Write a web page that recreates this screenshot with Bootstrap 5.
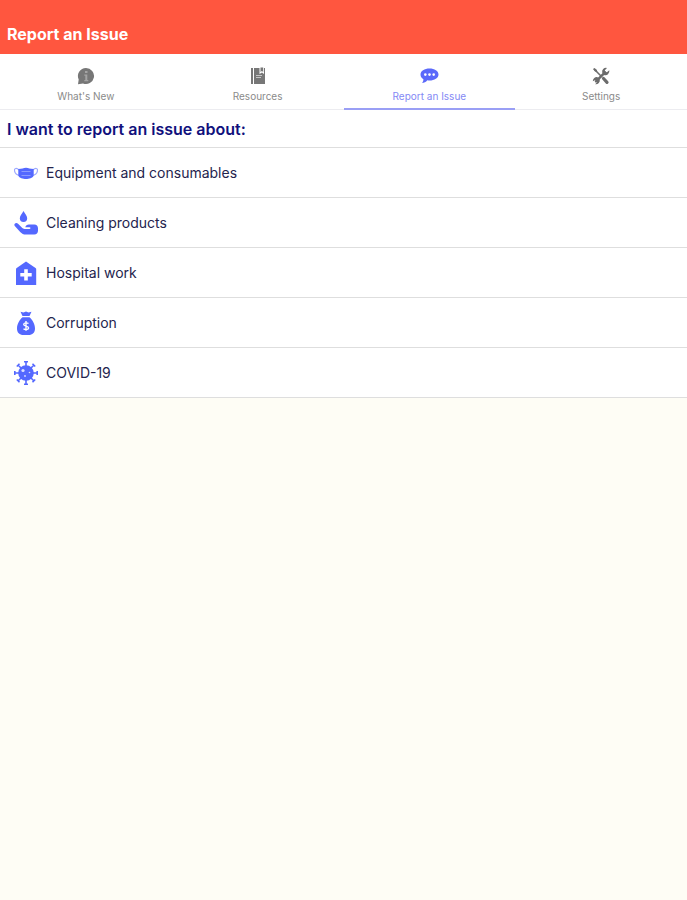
<!DOCTYPE html>
<html lang="en">
<head>
<meta charset="utf-8">
<meta name="viewport" content="width=device-width, initial-scale=1">
<title>Report an Issue</title>
<link href="https://cdn.jsdelivr.net/npm/bootstrap@5.3.0/dist/css/bootstrap.min.css" rel="stylesheet">
<style>
  body { font-family: Inter, "Liberation Sans", sans-serif; background: #fefdf5; color: #1c1c4c; }
  .app-header { background: #ff563f; padding: 24px 7px 10px; }
  .app-title { font-size: 16px; line-height: 20px; font-weight: 700; color: #fff; }
  .app-tabs { border-bottom: 1px solid #ececf0; }
  .app-tab { flex: 1 1 0; padding: 12px 0 6px; border-bottom: 2px solid transparent; color: #8a8a8a; font-size: 10px; line-height: 12px; gap: 4px; margin-bottom: -1px; }
  .app-tab svg { width: 20px; height: 20px; }
  .app-tab.active { color: #8489f5; border-bottom-color: #9a9ff5; }
  .app-tab.active svg { color: #5b69fa; }
  .section-title { font-size: 16px; line-height: 20px; font-weight: 600; color: #10107c; padding: 9px 7px 8px; border-bottom: 1px solid #dedede; }
  .issue-row { height: 50px; padding: 0 14px; gap: 8px; font-size: 14px; line-height: 20px; color: #24244e; border-bottom: 1px solid #dedede; }
  .issue-row svg { width: 24px; height: 24px; color: #5468ff; flex: none; }
</style>
<script defer src="https://cdn.jsdelivr.net/npm/bootstrap@5.3.0/dist/js/bootstrap.bundle.min.js"></script>
</head>
<body>
<header class="app-header"><h1 class="app-title m-0">Report an Issue</h1></header>
<nav class="app-tabs bg-white d-flex" aria-label="Main">
  <a class="app-tab d-flex flex-column align-items-center text-decoration-none" href="#news">
    <svg viewBox="0 0 20 20" aria-hidden="true"><path fill="#777" d="M10 2a8 8 0 1 1-3 15.400L2 18.200l.7-4.700A8 8 0 0 1 10 2z"/><path fill="#a4a4a4" d="M9 5h2.500v2H9zM8.300 8.500h3V14h1v1.300H8.300V14h1V9.800h-1z"/></svg>
    <span>What's New</span>
  </a>
  <a class="app-tab d-flex flex-column align-items-center text-decoration-none" href="#resources">
    <svg viewBox="0 0 20 20" aria-hidden="true"><path fill="#777" d="M3 2h2v16H3zM6 2h5.500v6l2.500-1.500L16 8V2h1v16H6z"/><path fill="#777" d="M12.500 1.500h2.700v4.500l-1.300-1-1.400 1z"/><path stroke="#c4c4c4" d="M8 9.500h6M8 11.500h5"/></svg>
    <span>Resources</span>
  </a>
  <a class="app-tab active d-flex flex-column align-items-center text-decoration-none" href="#report" aria-current="page">
    <svg viewBox="0 0 20 20" aria-hidden="true"><path fill="currentColor" d="M10.500 2.500c5 0 9 2.500 9 6s-4 6-9 6c-.8 0-1.500 0-2.200-.2C7 16 5 17 3 17c.9-1 1.500-2.300 1.400-3.800C2.600 12.100 1.500 10.500 1.500 8.500c0-3.500 4-6 9-6z"/><g fill="#fff"><circle cx="6.300" cy="8.600" r="1.300"/><circle cx="10.500" cy="8.600" r="1.300"/><circle cx="14.700" cy="8.600" r="1.300"/></g></svg>
    <span>Report an Issue</span>
  </a>
  <a class="app-tab d-flex flex-column align-items-center text-decoration-none" href="#settings">
    <svg viewBox="0 0 20 20" aria-hidden="true"><g fill="none" stroke="#6c6c6c" stroke-linecap="round"><path stroke-width="1.500" d="M3.500 3.500l7 7"/><path stroke-width="3.200" d="M12.500 12.500l3.500 3.800"/><path stroke-width="2.400" d="M5 15.300l9-9"/></g><path fill="#6c6c6c" d="M2 3l1.500-1L6 4l.2 2L4 5.500zM18.300 4.300a4 4 0 0 1-5.300 4.600L11.300 7A4 4 0 0 1 16 1.900L13.800 4.300l.5 1.500 1.600.4zM1.800 15.200a4 4 0 0 1 4.800-4L8.700 13.200a4 4 0 0 1-4.500 5L6 16.200l-.5-1.600-1.600-.4z"/></svg>
    <span>Settings</span>
  </a>
</nav>
<main class="bg-white">
  <h2 class="section-title m-0">I want to report an issue about:</h2>
  <div class="d-flex flex-column">
    <a class="issue-row d-flex align-items-center text-decoration-none" href="#equipment">
      <svg viewBox="0 0 24 24" aria-hidden="true"><g fill="none" stroke="#9ca8ff" stroke-width="1.200"><path d="M5 9C2.500 6.500.3 7.300.5 9.500c.2 2.500 2.500 4.500 5.500 5"/><path d="M19 9c2.500-2.500 4.700-1.700 4.500.5-.2 2.500-2.500 4.500-5.500 5"/></g><path fill="currentColor" d="M4.300 8C8 8 9.500 6.700 12 6.700S16 8 19.700 8v6.500c-1 2.700-4.700 3.500-7.700 3.500s-6.700-.8-7.700-3.500z"/><path fill="none" stroke="#8c9aff" d="M7.500 10.500h9M7.500 14.500h9"/></svg>
      <span>Equipment and consumables</span>
    </a>
    <a class="issue-row d-flex align-items-center text-decoration-none" href="#cleaning">
      <svg viewBox="0 0 24 24" aria-hidden="true"><path fill="currentColor" d="M9.500 0c1.500 2.800 3.700 4.800 3.700 7.200a3.700 3.700 0 0 1-7.400 0C5.800 4.800 8 2.800 9.500 0zM1 12.500c1-1 2.300-.5 3.300.5l4 4c1 .9 2 1 3.200 1h4c1.300 0 1.300-1.700 0-1.700h-4.200c.5-1.800 1.700-2.700 3.500-2.700h5.500c2.300 0 3.700 1.600 3.700 3.700v2.500c0 2.300-1.500 3.700-3.700 3.700H12c-2.500 0-4.200-.9-5.800-2.600L1 15.300c-.9-.9-.9-2 0-2.800z"/></svg>
      <span>Cleaning products</span>
    </a>
    <a class="issue-row d-flex align-items-center text-decoration-none" href="#hospital">
      <svg viewBox="0 0 24 24" aria-hidden="true"><path fill="currentColor" d="M12 0.500l9.500 6.500c.5.400.7.800.7 1.400V24H2V8.400c0-.6.200-1 .7-1.400z"/><path fill="#fff" d="M10.200 8.200h3.600v3.800h3.900v3.600h-3.900v3.800h-3.600v-3.800H6.300V12h3.900z"/></svg>
      <span>Hospital work</span>
    </a>
    <a class="issue-row d-flex align-items-center text-decoration-none" href="#corruption">
      <svg viewBox="0 0 24 24" aria-hidden="true"><path fill="currentColor" d="M6.500 .8l3 .8L12 .5l2.500 1.100 3-.8L15.500 5H8.500zM8.500 6.300h7C18.500 9 21 13 21 17.500c0 4.300-2.500 6.500-6.500 6.500h-5C5.500 24 3 21.800 3 17.500 3 13 5.500 9 8.500 6.300z"/><path fill="none" stroke="#fff" stroke-width="1.400" d="M14.500 12.500c-1-.8-4.800-1.200-4.800 1 0 2 4.900 1.200 4.900 3.500 0 2-3.700 2-5.100.8M12 10v9.800"/></svg>
      <span>Corruption</span>
    </a>
    <a class="issue-row d-flex align-items-center text-decoration-none" href="#covid">
      <svg viewBox="0 0 24 24" aria-hidden="true"><circle cx="12" cy="12" r="7.800" fill="currentColor"/><path fill="none" stroke="currentColor" stroke-width="1.600" d="M12 5V1M12 19v4M5 12H1M19 12h4M7 7L4 4M17 7l3-3M7 17l-3 3M17 17l3 3M10 .8h4M10 23.200h4M.8 10v4M23.200 10v4M2.800 5.500l2.700-2.700M18.500 2.800l2.700 2.700M2.800 18.500l2.700 2.700M18.500 21.200l2.700-2.700"/><g fill="#dce0ff"><circle cx="9" cy="9.500" r="1.600"/><circle cx="15.500" cy="11.500" r=".8"/><circle cx="11" cy="15" r=".9"/></g></svg>
      <span>COVID-19</span>
    </a>
  </div>
</main>
</body>
</html>
